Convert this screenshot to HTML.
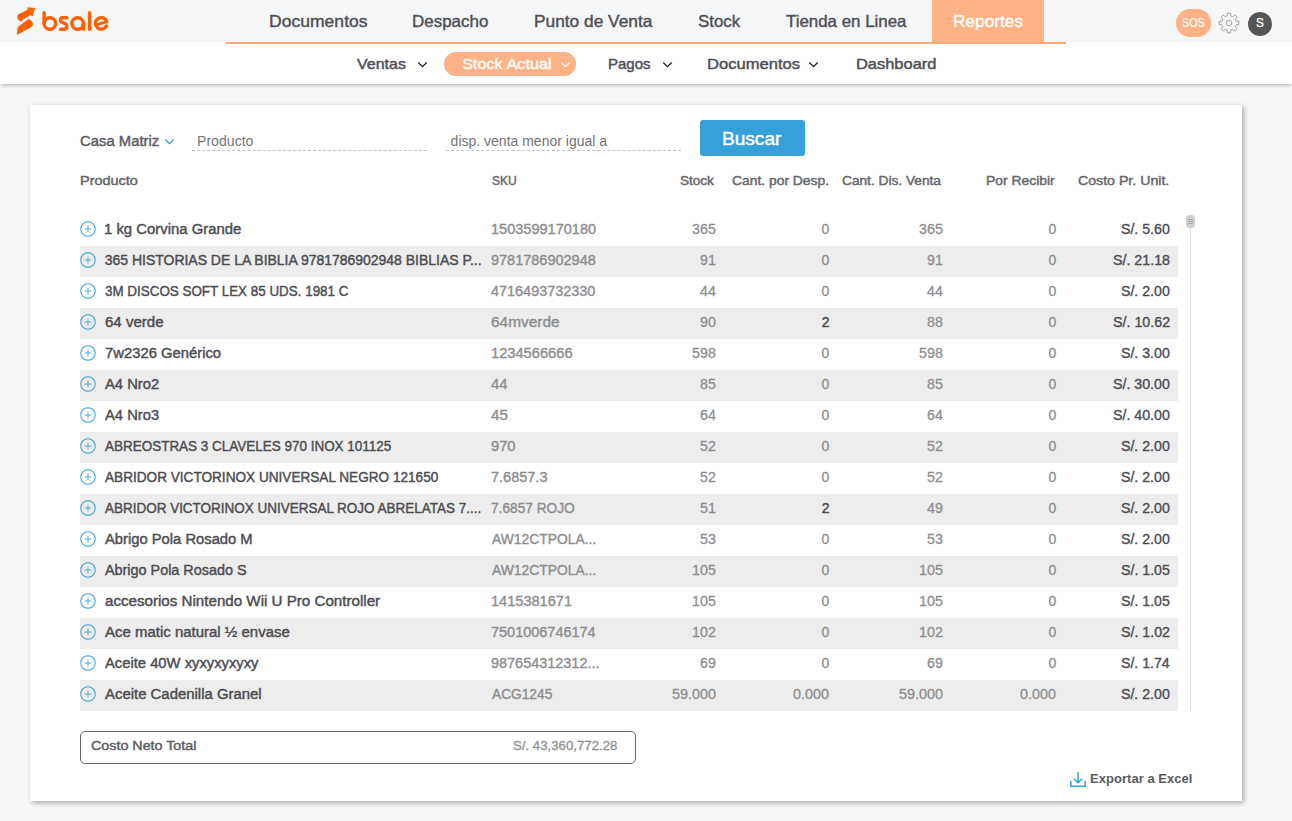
<!DOCTYPE html>
<html><head><meta charset="utf-8">
<style>
*{box-sizing:border-box;margin:0;padding:0}
html,body{width:1292px;height:821px;overflow:hidden;background:#f5f6f8;font-family:"Liberation Sans",sans-serif;color:#4d4d4d}
.abs{position:absolute;white-space:nowrap}
.t{position:absolute;white-space:nowrap}
#sub{position:absolute;left:0;top:42px;width:1292px;height:42px;background:#fff;box-shadow:0 3px 3px -1px rgba(0,0,0,0.2)}
#oline{position:absolute;left:226px;top:42px;width:840px;height:2px;background:#ffa97a}
#rep{position:absolute;left:932px;top:0;width:112px;height:42px;background:#ffb285}
#pill{position:absolute;left:444px;top:52px;width:132px;height:24px;border-radius:12px;background:#ffb285}
#card{position:absolute;left:30px;top:105px;width:1212px;height:696px;background:#fff;box-shadow:2px 2px 5px rgba(0,0,0,0.3)}
.dash{position:absolute;height:1px;border-top:1px dashed #c4c4c4}
#buscar{position:absolute;left:700px;top:120px;width:105px;height:36px;border-radius:3px;background:#34a1d8}
.row{position:absolute;left:80px;width:1098px;height:31px}
.row.s{background:#ededed}
.plus{position:absolute;left:0;top:6px;width:16px;height:16px}
.chev{position:absolute}
</style></head><body>
<div id="sub"></div>
<div id="rep"></div>
<div id="oline"></div>
<div id="pill"></div>
<svg class="abs" style="left:0;top:0" width="120" height="42" viewBox="0 0 120 42">
  <path d="M27.3,7.3 L35.1,8.1 L32.4,16.2 L30.6,15 L21.9,20.4 L21.5,21.9 Q17,19.5 17.1,16.8 Q17.2,15 18.5,14.2 L27.5,9.8 Z" fill="#ff6000"/>
  <path d="M28.5,18.9 Q33.3,21.3 32.9,24.3 Q32.6,26.4 31,27.2 L17.1,34.9 L17.2,29.2 Q17.6,26.6 19.6,25.4 Z" fill="#ff6000"/>
  <g fill="none" stroke="#ff6000" stroke-width="3.4" stroke-linecap="round">
    <path d="M44.1,12.7 V23.5"/>
    <circle cx="49.85" cy="23.5" r="5.75"/>
    <path d="M66.8,17.8 L62.7,17.8 Q60.5,17.8 60.5,20.1 Q60.5,21.9 62.6,22.6 L64.9,23.5 Q66.8,24.3 66.8,26.6 Q66.8,29.3 64,29.3 L60.6,29.3"/>
    <circle cx="77.6" cy="23.5" r="5.75"/>
    <path d="M83.4,23.5 V29.3"/>
    <path d="M89.5,12.7 V29.3"/>
    <path d="M106.7,21.6 A5.75,5.75 0 1 0 106.4,25.9"/><path d="M95.8,25.2 L106.7,21.6" stroke-width="2.8"/>
  </g>
</svg>
<div class="abs" style="left:1176px;top:9px;width:35px;height:28px;border-radius:14px;background:#ffb285"></div>
<svg class="abs" style="left:1218px;top:12px" width="22" height="22" viewBox="0 0 22 22"><path d="M9.18,3.93 L9.44,1.12 L12.56,1.12 L12.82,3.93 L14.72,4.72 L16.88,2.91 L19.09,5.12 L17.28,7.28 L18.07,9.18 L20.88,9.44 L20.88,12.56 L18.07,12.82 L17.28,14.72 L19.09,16.88 L16.88,19.09 L14.72,17.28 L12.82,18.07 L12.56,20.88 L9.44,20.88 L9.18,18.07 L7.28,17.28 L5.12,19.09 L2.91,16.88 L4.72,14.72 L3.93,12.82 L1.12,12.56 L1.12,9.44 L3.93,9.18 L4.72,7.28 L2.91,5.12 L5.12,2.91 L7.28,4.72Z" fill="none" stroke="#909090" stroke-width="0.8" stroke-linejoin="round"/><circle cx="11" cy="11" r="2.8" fill="none" stroke="#909090" stroke-width="0.8"/></svg>
<div class="abs" style="left:1248px;top:12px;width:24px;height:24px;border-radius:12px;background:#555"></div>


<div id="card"></div>
<svg class="chev" style="left:417px;top:61px" width="11" height="8" viewBox="0 0 11 8"><path d="M1.3,1.5 L5.5,5.6 L9.7,1.5" fill="none" stroke="#1a1a1a" stroke-width="1.25"/></svg>
<svg class="chev" style="left:560px;top:61px" width="11" height="8" viewBox="0 0 11 8"><path d="M1.3,1.5 L5.5,5.6 L9.7,1.5" fill="none" stroke="#ffffff" stroke-width="1.1"/></svg>
<svg class="chev" style="left:662px;top:61px" width="11" height="8" viewBox="0 0 11 8"><path d="M1.3,1.5 L5.5,5.6 L9.7,1.5" fill="none" stroke="#1a1a1a" stroke-width="1.25"/></svg>
<svg class="chev" style="left:808px;top:61px" width="11" height="8" viewBox="0 0 11 8"><path d="M1.3,1.5 L5.5,5.6 L9.7,1.5" fill="none" stroke="#1a1a1a" stroke-width="1.25"/></svg>
<svg class="chev" style="left:164px;top:138px" width="11" height="8" viewBox="0 0 11 8"><path d="M1.3,1.5 L5.5,5.6 L9.7,1.5" fill="none" stroke="#2a98d8" stroke-width="1.15"/></svg>

<div class="dash" style="left:192px;top:150px;width:235px"></div>
<div class="dash" style="left:446px;top:150px;width:235px"></div>
<div id="buscar"></div>

<div class="row" style="top:215px"><svg class="plus" viewBox="0 0 16 16"><circle cx="8" cy="8" r="7.25" fill="none" stroke="#3aa2d9" stroke-width="1.05"/><path d="M8 4.6V11.4M4.6 8H11.4" stroke="#4aaadc" stroke-width="0.95"/></svg></div>
<div class="row s" style="top:246px"><svg class="plus" viewBox="0 0 16 16"><circle cx="8" cy="8" r="7.25" fill="none" stroke="#3aa2d9" stroke-width="1.05"/><path d="M8 4.6V11.4M4.6 8H11.4" stroke="#4aaadc" stroke-width="0.95"/></svg></div>
<div class="row" style="top:277px"><svg class="plus" viewBox="0 0 16 16"><circle cx="8" cy="8" r="7.25" fill="none" stroke="#3aa2d9" stroke-width="1.05"/><path d="M8 4.6V11.4M4.6 8H11.4" stroke="#4aaadc" stroke-width="0.95"/></svg></div>
<div class="row s" style="top:308px"><svg class="plus" viewBox="0 0 16 16"><circle cx="8" cy="8" r="7.25" fill="none" stroke="#3aa2d9" stroke-width="1.05"/><path d="M8 4.6V11.4M4.6 8H11.4" stroke="#4aaadc" stroke-width="0.95"/></svg></div>
<div class="row" style="top:339px"><svg class="plus" viewBox="0 0 16 16"><circle cx="8" cy="8" r="7.25" fill="none" stroke="#3aa2d9" stroke-width="1.05"/><path d="M8 4.6V11.4M4.6 8H11.4" stroke="#4aaadc" stroke-width="0.95"/></svg></div>
<div class="row s" style="top:370px"><svg class="plus" viewBox="0 0 16 16"><circle cx="8" cy="8" r="7.25" fill="none" stroke="#3aa2d9" stroke-width="1.05"/><path d="M8 4.6V11.4M4.6 8H11.4" stroke="#4aaadc" stroke-width="0.95"/></svg></div>
<div class="row" style="top:401px"><svg class="plus" viewBox="0 0 16 16"><circle cx="8" cy="8" r="7.25" fill="none" stroke="#3aa2d9" stroke-width="1.05"/><path d="M8 4.6V11.4M4.6 8H11.4" stroke="#4aaadc" stroke-width="0.95"/></svg></div>
<div class="row s" style="top:432px"><svg class="plus" viewBox="0 0 16 16"><circle cx="8" cy="8" r="7.25" fill="none" stroke="#3aa2d9" stroke-width="1.05"/><path d="M8 4.6V11.4M4.6 8H11.4" stroke="#4aaadc" stroke-width="0.95"/></svg></div>
<div class="row" style="top:463px"><svg class="plus" viewBox="0 0 16 16"><circle cx="8" cy="8" r="7.25" fill="none" stroke="#3aa2d9" stroke-width="1.05"/><path d="M8 4.6V11.4M4.6 8H11.4" stroke="#4aaadc" stroke-width="0.95"/></svg></div>
<div class="row s" style="top:494px"><svg class="plus" viewBox="0 0 16 16"><circle cx="8" cy="8" r="7.25" fill="none" stroke="#3aa2d9" stroke-width="1.05"/><path d="M8 4.6V11.4M4.6 8H11.4" stroke="#4aaadc" stroke-width="0.95"/></svg></div>
<div class="row" style="top:525px"><svg class="plus" viewBox="0 0 16 16"><circle cx="8" cy="8" r="7.25" fill="none" stroke="#3aa2d9" stroke-width="1.05"/><path d="M8 4.6V11.4M4.6 8H11.4" stroke="#4aaadc" stroke-width="0.95"/></svg></div>
<div class="row s" style="top:556px"><svg class="plus" viewBox="0 0 16 16"><circle cx="8" cy="8" r="7.25" fill="none" stroke="#3aa2d9" stroke-width="1.05"/><path d="M8 4.6V11.4M4.6 8H11.4" stroke="#4aaadc" stroke-width="0.95"/></svg></div>
<div class="row" style="top:587px"><svg class="plus" viewBox="0 0 16 16"><circle cx="8" cy="8" r="7.25" fill="none" stroke="#3aa2d9" stroke-width="1.05"/><path d="M8 4.6V11.4M4.6 8H11.4" stroke="#4aaadc" stroke-width="0.95"/></svg></div>
<div class="row s" style="top:618px"><svg class="plus" viewBox="0 0 16 16"><circle cx="8" cy="8" r="7.25" fill="none" stroke="#3aa2d9" stroke-width="1.05"/><path d="M8 4.6V11.4M4.6 8H11.4" stroke="#4aaadc" stroke-width="0.95"/></svg></div>
<div class="row" style="top:649px"><svg class="plus" viewBox="0 0 16 16"><circle cx="8" cy="8" r="7.25" fill="none" stroke="#3aa2d9" stroke-width="1.05"/><path d="M8 4.6V11.4M4.6 8H11.4" stroke="#4aaadc" stroke-width="0.95"/></svg></div>
<div class="row s" style="top:680px"><svg class="plus" viewBox="0 0 16 16"><circle cx="8" cy="8" r="7.25" fill="none" stroke="#3aa2d9" stroke-width="1.05"/><path d="M8 4.6V11.4M4.6 8H11.4" stroke="#4aaadc" stroke-width="0.95"/></svg></div>

<div class="abs" style="left:1190px;top:226px;width:1px;height:485px;background:#dcdcdc"></div>
<div class="abs" style="left:1186px;top:215px;width:9px;height:13px;border-radius:4px;background:#d0d0d0"></div>
<div class="abs" style="left:1188px;top:219px;width:5px;height:1px;background:#a8a8a8"></div>
<div class="abs" style="left:1188px;top:221px;width:5px;height:1px;background:#a8a8a8"></div>
<div class="abs" style="left:1188px;top:223px;width:5px;height:1px;background:#a8a8a8"></div>

<div class="abs" style="left:80px;top:731px;width:556px;height:33px;border:1px solid #666;border-radius:5px"></div>
<svg class="abs" style="left:1069px;top:771px" width="18" height="17" viewBox="0 0 18 17"><g fill="none" stroke="#3aa0d8" stroke-width="1.5" stroke-linejoin="round" stroke-linecap="round"><path d="M9,1.7 V11.8 M5.4,8.3 L9,11.8 L12.6,8.3"/><path d="M1.8,10.5 V15.2 H16.2 V10.5"/></g></svg>

<div class="t" style="left:268.82px;top:13px;font-size:16.5px;line-height:16.5px;color:#4f4f57;transform:scaleX(1.0639);transform-origin:0 0;-webkit-text-stroke:0.4px #4f4f57;">Documentos</div>
<div class="t" style="left:412.46px;top:13px;font-size:16.5px;line-height:16.5px;color:#4f4f57;transform:scaleX(1.0277);transform-origin:0 0;-webkit-text-stroke:0.4px #4f4f57;">Despacho</div>
<div class="t" style="left:533.84px;top:13px;font-size:16.5px;line-height:16.5px;color:#4f4f57;transform:scaleX(1.0493);transform-origin:0 0;-webkit-text-stroke:0.4px #4f4f57;">Punto de Venta</div>
<div class="t" style="left:697.99px;top:13px;font-size:16.5px;line-height:16.5px;color:#4f4f57;transform:scaleX(1.0197);transform-origin:0 0;-webkit-text-stroke:0.4px #4f4f57;">Stock</div>
<div class="t" style="left:786.49px;top:13px;font-size:16.5px;line-height:16.5px;color:#4f4f57;transform:scaleX(1.0230);transform-origin:0 0;-webkit-text-stroke:0.4px #4f4f57;">Tienda en Linea</div>
<div class="t" style="left:952.64px;top:13px;font-size:16.5px;line-height:16.5px;color:#ffffff;transform:scaleX(1.0461);transform-origin:0 0;-webkit-text-stroke:0.4px #ffffff;">Reportes</div>
<div class="t" style="left:356.99px;top:57px;font-size:14.5px;line-height:14.5px;color:#4f4f57;transform:scaleX(1.1027);transform-origin:0 0;-webkit-text-stroke:0.45px #4f4f57;">Ventas</div>
<div class="t" style="left:607.76px;top:57px;font-size:14.5px;line-height:14.5px;color:#4f4f57;transform:scaleX(1.0354);transform-origin:0 0;-webkit-text-stroke:0.45px #4f4f57;">Pagos</div>
<div class="t" style="left:706.53px;top:57px;font-size:14.5px;line-height:14.5px;color:#4f4f57;transform:scaleX(1.1430);transform-origin:0 0;-webkit-text-stroke:0.45px #4f4f57;">Documentos</div>
<div class="t" style="left:855.54px;top:57px;font-size:14.5px;line-height:14.5px;color:#4f4f57;transform:scaleX(1.1335);transform-origin:0 0;-webkit-text-stroke:0.45px #4f4f57;">Dashboard</div>
<div class="t" style="left:462.01px;top:57px;font-size:14.5px;line-height:14.5px;color:#ffffff;transform:scaleX(1.1240);transform-origin:0 0;-webkit-text-stroke:0.4px #ffffff;">Stock Actual</div>
<div class="t" style="left:79.96px;top:134px;font-size:14px;line-height:14px;color:#5c5c62;transform:scaleX(1.0600);transform-origin:0 0;-webkit-text-stroke:0.42px #5c5c62;">Casa Matriz</div>
<div class="t" style="left:196.89px;top:134px;font-size:14px;line-height:14px;color:#757575;transform:scaleX(1.0074);transform-origin:0 0;">Producto</div>
<div class="t" style="left:450.60px;top:134px;font-size:14px;line-height:14px;color:#757575;letter-spacing:0.000px;">disp. venta menor igual a</div>
<div class="t" style="left:722.21px;top:130px;font-size:18px;line-height:18px;color:#ffffff;transform:scaleX(1.0590);transform-origin:0 0;-webkit-text-stroke:0.45px #ffffff;">Buscar</div>
<div class="t" style="left:79.59px;top:174px;font-size:13px;line-height:13px;color:#67676d;transform:scaleX(1.1129);transform-origin:0 0;-webkit-text-stroke:0.45px #67676d;">Producto</div>
<div class="t" style="left:492.05px;top:174px;font-size:13px;line-height:13px;color:#67676d;transform:scaleX(0.9203);transform-origin:0 0;-webkit-text-stroke:0.45px #67676d;">SKU</div>
<div class="t" style="left:680.28px;top:174px;font-size:13px;line-height:13px;color:#67676d;transform:scaleX(1.0408);transform-origin:0 0;-webkit-text-stroke:0.45px #67676d;">Stock</div>
<div class="t" style="left:731.76px;top:174px;font-size:13px;line-height:13px;color:#67676d;transform:scaleX(1.0661);transform-origin:0 0;-webkit-text-stroke:0.45px #67676d;">Cant. por Desp.</div>
<div class="t" style="left:842.37px;top:174px;font-size:13px;line-height:13px;color:#67676d;transform:scaleX(1.0535);transform-origin:0 0;-webkit-text-stroke:0.45px #67676d;">Cant. Dis. Venta</div>
<div class="t" style="left:986.03px;top:174px;font-size:13px;line-height:13px;color:#67676d;transform:scaleX(1.0681);transform-origin:0 0;-webkit-text-stroke:0.45px #67676d;">Por Recibir</div>
<div class="t" style="left:1077.95px;top:174px;font-size:13px;line-height:13px;color:#67676d;transform:scaleX(1.0889);transform-origin:0 0;-webkit-text-stroke:0.45px #67676d;">Costo Pr. Unit.</div>
<div class="t" style="left:104.24px;top:222px;font-size:14px;line-height:14px;color:#4d4d53;transform:scaleX(1.0627);transform-origin:0 0;-webkit-text-stroke:0.42px #4d4d53;">1 kg Corvina Grande</div>
<div class="t" style="left:490.76px;top:222px;font-size:14px;line-height:14px;color:#8e8e90;transform:scaleX(1.0381);transform-origin:0 0;-webkit-text-stroke:0.38px #8e8e90;">1503599170180</div>
<div class="t" style="left:691.75px;top:222px;font-size:14px;line-height:14px;color:#8e8e90;transform:scaleX(1.0197);transform-origin:0 0;-webkit-text-stroke:0.28px #8e8e90;">365</div>
<div class="t" style="left:821.50px;top:222px;font-size:14px;line-height:14px;color:#8e8e90;transform:scaleX(1.0000);transform-origin:0 0;-webkit-text-stroke:0.28px #8e8e90;">0</div>
<div class="t" style="left:918.85px;top:222px;font-size:14px;line-height:14px;color:#8e8e90;transform:scaleX(1.0197);transform-origin:0 0;-webkit-text-stroke:0.28px #8e8e90;">365</div>
<div class="t" style="left:1048.40px;top:222px;font-size:14px;line-height:14px;color:#8e8e90;transform:scaleX(1.0000);transform-origin:0 0;-webkit-text-stroke:0.28px #8e8e90;">0</div>
<div class="t" style="left:1121.09px;top:222px;font-size:14px;line-height:14px;color:#4d4d53;transform:scaleX(1.0106);transform-origin:0 0;-webkit-text-stroke:0.36px #4d4d53;">S/. 5.60</div>
<div class="t" style="left:104.80px;top:253px;font-size:14px;line-height:14px;color:#4d4d53;letter-spacing:-0.019px;-webkit-text-stroke:0.42px #4d4d53;">365 HISTORIAS DE LA BIBLIA 9781786902948 BIBLIAS P...</div>
<div class="t" style="left:491.18px;top:253px;font-size:14px;line-height:14px;color:#8e8e90;transform:scaleX(1.0350);transform-origin:0 0;-webkit-text-stroke:0.38px #8e8e90;">9781786902948</div>
<div class="t" style="left:699.87px;top:253px;font-size:14px;line-height:14px;color:#8e8e90;transform:scaleX(1.0154);transform-origin:0 0;-webkit-text-stroke:0.28px #8e8e90;">91</div>
<div class="t" style="left:821.50px;top:253px;font-size:14px;line-height:14px;color:#8e8e90;transform:scaleX(1.0000);transform-origin:0 0;-webkit-text-stroke:0.28px #8e8e90;">0</div>
<div class="t" style="left:926.97px;top:253px;font-size:14px;line-height:14px;color:#8e8e90;transform:scaleX(1.0154);transform-origin:0 0;-webkit-text-stroke:0.28px #8e8e90;">91</div>
<div class="t" style="left:1048.40px;top:253px;font-size:14px;line-height:14px;color:#8e8e90;transform:scaleX(1.0000);transform-origin:0 0;-webkit-text-stroke:0.28px #8e8e90;">0</div>
<div class="t" style="left:1112.99px;top:253px;font-size:14px;line-height:14px;color:#4d4d53;transform:scaleX(1.0164);transform-origin:0 0;-webkit-text-stroke:0.36px #4d4d53;">S/. 21.18</div>
<div class="t" style="left:104.82px;top:284px;font-size:14px;line-height:14px;color:#4d4d53;transform:scaleX(0.9577);transform-origin:0 0;-webkit-text-stroke:0.42px #4d4d53;">3M DISCOS SOFT LEX 85 UDS. 1981 C</div>
<div class="t" style="left:491.49px;top:284px;font-size:14px;line-height:14px;color:#8e8e90;transform:scaleX(1.0309);transform-origin:0 0;-webkit-text-stroke:0.38px #8e8e90;">4716493732330</div>
<div class="t" style="left:699.58px;top:284px;font-size:14px;line-height:14px;color:#8e8e90;transform:scaleX(1.0148);transform-origin:0 0;-webkit-text-stroke:0.28px #8e8e90;">44</div>
<div class="t" style="left:821.50px;top:284px;font-size:14px;line-height:14px;color:#8e8e90;transform:scaleX(1.0000);transform-origin:0 0;-webkit-text-stroke:0.28px #8e8e90;">0</div>
<div class="t" style="left:926.68px;top:284px;font-size:14px;line-height:14px;color:#8e8e90;transform:scaleX(1.0148);transform-origin:0 0;-webkit-text-stroke:0.28px #8e8e90;">44</div>
<div class="t" style="left:1048.40px;top:284px;font-size:14px;line-height:14px;color:#8e8e90;transform:scaleX(1.0000);transform-origin:0 0;-webkit-text-stroke:0.28px #8e8e90;">0</div>
<div class="t" style="left:1121.09px;top:284px;font-size:14px;line-height:14px;color:#4d4d53;transform:scaleX(1.0106);transform-origin:0 0;-webkit-text-stroke:0.36px #4d4d53;">S/. 2.00</div>
<div class="t" style="left:104.55px;top:315px;font-size:14px;line-height:14px;color:#4d4d53;transform:scaleX(1.0752);transform-origin:0 0;-webkit-text-stroke:0.42px #4d4d53;">64 verde</div>
<div class="t" style="left:491.03px;top:315px;font-size:14px;line-height:14px;color:#8e8e90;transform:scaleX(1.1016);transform-origin:0 0;-webkit-text-stroke:0.38px #8e8e90;">64mverde</div>
<div class="t" style="left:699.67px;top:315px;font-size:14px;line-height:14px;color:#8e8e90;transform:scaleX(1.0152);transform-origin:0 0;-webkit-text-stroke:0.28px #8e8e90;">90</div>
<div class="t" style="left:821.70px;top:315px;font-size:14px;line-height:14px;color:#4d4d53;transform:scaleX(1.0000);transform-origin:0 0;-webkit-text-stroke:0.45px #4d4d53;">2</div>
<div class="t" style="left:926.87px;top:315px;font-size:14px;line-height:14px;color:#8e8e90;transform:scaleX(1.0153);transform-origin:0 0;-webkit-text-stroke:0.28px #8e8e90;">88</div>
<div class="t" style="left:1048.40px;top:315px;font-size:14px;line-height:14px;color:#8e8e90;transform:scaleX(1.0000);transform-origin:0 0;-webkit-text-stroke:0.28px #8e8e90;">0</div>
<div class="t" style="left:1112.99px;top:315px;font-size:14px;line-height:14px;color:#4d4d53;transform:scaleX(1.0182);transform-origin:0 0;-webkit-text-stroke:0.36px #4d4d53;">S/. 10.62</div>
<div class="t" style="left:104.56px;top:346px;font-size:14px;line-height:14px;color:#4d4d53;transform:scaleX(1.0581);transform-origin:0 0;-webkit-text-stroke:0.42px #4d4d53;">7w2326 Genérico</div>
<div class="t" style="left:490.75px;top:346px;font-size:14px;line-height:14px;color:#8e8e90;transform:scaleX(1.0472);transform-origin:0 0;-webkit-text-stroke:0.38px #8e8e90;">1234566666</div>
<div class="t" style="left:691.75px;top:346px;font-size:14px;line-height:14px;color:#8e8e90;transform:scaleX(1.0197);transform-origin:0 0;-webkit-text-stroke:0.28px #8e8e90;">598</div>
<div class="t" style="left:821.50px;top:346px;font-size:14px;line-height:14px;color:#8e8e90;transform:scaleX(1.0000);transform-origin:0 0;-webkit-text-stroke:0.28px #8e8e90;">0</div>
<div class="t" style="left:918.85px;top:346px;font-size:14px;line-height:14px;color:#8e8e90;transform:scaleX(1.0197);transform-origin:0 0;-webkit-text-stroke:0.28px #8e8e90;">598</div>
<div class="t" style="left:1048.40px;top:346px;font-size:14px;line-height:14px;color:#8e8e90;transform:scaleX(1.0000);transform-origin:0 0;-webkit-text-stroke:0.28px #8e8e90;">0</div>
<div class="t" style="left:1121.09px;top:346px;font-size:14px;line-height:14px;color:#4d4d53;transform:scaleX(1.0106);transform-origin:0 0;-webkit-text-stroke:0.36px #4d4d53;">S/. 3.00</div>
<div class="t" style="left:105.30px;top:377px;font-size:14px;line-height:14px;color:#4d4d53;transform:scaleX(1.0552);transform-origin:0 0;-webkit-text-stroke:0.42px #4d4d53;">A4 Nro2</div>
<div class="t" style="left:491.48px;top:377px;font-size:14px;line-height:14px;color:#8e8e90;transform:scaleX(1.0671);transform-origin:0 0;-webkit-text-stroke:0.38px #8e8e90;">44</div>
<div class="t" style="left:699.77px;top:377px;font-size:14px;line-height:14px;color:#8e8e90;transform:scaleX(1.0153);transform-origin:0 0;-webkit-text-stroke:0.28px #8e8e90;">85</div>
<div class="t" style="left:821.50px;top:377px;font-size:14px;line-height:14px;color:#8e8e90;transform:scaleX(1.0000);transform-origin:0 0;-webkit-text-stroke:0.28px #8e8e90;">0</div>
<div class="t" style="left:926.87px;top:377px;font-size:14px;line-height:14px;color:#8e8e90;transform:scaleX(1.0153);transform-origin:0 0;-webkit-text-stroke:0.28px #8e8e90;">85</div>
<div class="t" style="left:1048.40px;top:377px;font-size:14px;line-height:14px;color:#8e8e90;transform:scaleX(1.0000);transform-origin:0 0;-webkit-text-stroke:0.28px #8e8e90;">0</div>
<div class="t" style="left:1112.99px;top:377px;font-size:14px;line-height:14px;color:#4d4d53;transform:scaleX(1.0145);transform-origin:0 0;-webkit-text-stroke:0.36px #4d4d53;">S/. 30.00</div>
<div class="t" style="left:105.30px;top:408px;font-size:14px;line-height:14px;color:#4d4d53;transform:scaleX(1.0531);transform-origin:0 0;-webkit-text-stroke:0.42px #4d4d53;">A4 Nro3</div>
<div class="t" style="left:491.48px;top:408px;font-size:14px;line-height:14px;color:#8e8e90;transform:scaleX(1.0816);transform-origin:0 0;-webkit-text-stroke:0.38px #8e8e90;">45</div>
<div class="t" style="left:699.57px;top:408px;font-size:14px;line-height:14px;color:#8e8e90;transform:scaleX(1.0152);transform-origin:0 0;-webkit-text-stroke:0.28px #8e8e90;">64</div>
<div class="t" style="left:821.50px;top:408px;font-size:14px;line-height:14px;color:#8e8e90;transform:scaleX(1.0000);transform-origin:0 0;-webkit-text-stroke:0.28px #8e8e90;">0</div>
<div class="t" style="left:926.67px;top:408px;font-size:14px;line-height:14px;color:#8e8e90;transform:scaleX(1.0152);transform-origin:0 0;-webkit-text-stroke:0.28px #8e8e90;">64</div>
<div class="t" style="left:1048.40px;top:408px;font-size:14px;line-height:14px;color:#8e8e90;transform:scaleX(1.0000);transform-origin:0 0;-webkit-text-stroke:0.28px #8e8e90;">0</div>
<div class="t" style="left:1112.99px;top:408px;font-size:14px;line-height:14px;color:#4d4d53;transform:scaleX(1.0145);transform-origin:0 0;-webkit-text-stroke:0.36px #4d4d53;">S/. 40.00</div>
<div class="t" style="left:105.30px;top:439px;font-size:14px;line-height:14px;color:#4d4d53;transform:scaleX(0.9623);transform-origin:0 0;-webkit-text-stroke:0.42px #4d4d53;">ABREOSTRAS 3 CLAVELES 970 INOX 101125</div>
<div class="t" style="left:491.17px;top:439px;font-size:14px;line-height:14px;color:#8e8e90;transform:scaleX(1.0493);transform-origin:0 0;-webkit-text-stroke:0.38px #8e8e90;">970</div>
<div class="t" style="left:699.87px;top:439px;font-size:14px;line-height:14px;color:#8e8e90;transform:scaleX(1.0153);transform-origin:0 0;-webkit-text-stroke:0.28px #8e8e90;">52</div>
<div class="t" style="left:821.50px;top:439px;font-size:14px;line-height:14px;color:#8e8e90;transform:scaleX(1.0000);transform-origin:0 0;-webkit-text-stroke:0.28px #8e8e90;">0</div>
<div class="t" style="left:926.97px;top:439px;font-size:14px;line-height:14px;color:#8e8e90;transform:scaleX(1.0153);transform-origin:0 0;-webkit-text-stroke:0.28px #8e8e90;">52</div>
<div class="t" style="left:1048.40px;top:439px;font-size:14px;line-height:14px;color:#8e8e90;transform:scaleX(1.0000);transform-origin:0 0;-webkit-text-stroke:0.28px #8e8e90;">0</div>
<div class="t" style="left:1121.09px;top:439px;font-size:14px;line-height:14px;color:#4d4d53;transform:scaleX(1.0106);transform-origin:0 0;-webkit-text-stroke:0.36px #4d4d53;">S/. 2.00</div>
<div class="t" style="left:105.30px;top:470px;font-size:14px;line-height:14px;color:#4d4d53;transform:scaleX(0.9714);transform-origin:0 0;-webkit-text-stroke:0.42px #4d4d53;">ABRIDOR VICTORINOX UNIVERSAL NEGRO 121650</div>
<div class="t" style="left:491.07px;top:470px;font-size:14px;line-height:14px;color:#8e8e90;transform:scaleX(1.0357);transform-origin:0 0;-webkit-text-stroke:0.38px #8e8e90;">7.6857.3</div>
<div class="t" style="left:699.87px;top:470px;font-size:14px;line-height:14px;color:#8e8e90;transform:scaleX(1.0153);transform-origin:0 0;-webkit-text-stroke:0.28px #8e8e90;">52</div>
<div class="t" style="left:821.50px;top:470px;font-size:14px;line-height:14px;color:#8e8e90;transform:scaleX(1.0000);transform-origin:0 0;-webkit-text-stroke:0.28px #8e8e90;">0</div>
<div class="t" style="left:926.97px;top:470px;font-size:14px;line-height:14px;color:#8e8e90;transform:scaleX(1.0153);transform-origin:0 0;-webkit-text-stroke:0.28px #8e8e90;">52</div>
<div class="t" style="left:1048.40px;top:470px;font-size:14px;line-height:14px;color:#8e8e90;transform:scaleX(1.0000);transform-origin:0 0;-webkit-text-stroke:0.28px #8e8e90;">0</div>
<div class="t" style="left:1121.09px;top:470px;font-size:14px;line-height:14px;color:#4d4d53;transform:scaleX(1.0106);transform-origin:0 0;-webkit-text-stroke:0.36px #4d4d53;">S/. 2.00</div>
<div class="t" style="left:105.30px;top:501px;font-size:14px;line-height:14px;color:#4d4d53;transform:scaleX(0.9625);transform-origin:0 0;-webkit-text-stroke:0.42px #4d4d53;">ABRIDOR VICTORINOX UNIVERSAL ROJO ABRELATAS 7....</div>
<div class="t" style="left:491.12px;top:501px;font-size:14px;line-height:14px;color:#8e8e90;transform:scaleX(0.9774);transform-origin:0 0;-webkit-text-stroke:0.38px #8e8e90;">7.6857 ROJO</div>
<div class="t" style="left:699.87px;top:501px;font-size:14px;line-height:14px;color:#8e8e90;transform:scaleX(1.0153);transform-origin:0 0;-webkit-text-stroke:0.28px #8e8e90;">51</div>
<div class="t" style="left:821.70px;top:501px;font-size:14px;line-height:14px;color:#4d4d53;transform:scaleX(1.0000);transform-origin:0 0;-webkit-text-stroke:0.45px #4d4d53;">2</div>
<div class="t" style="left:926.98px;top:501px;font-size:14px;line-height:14px;color:#8e8e90;transform:scaleX(1.0151);transform-origin:0 0;-webkit-text-stroke:0.28px #8e8e90;">49</div>
<div class="t" style="left:1048.40px;top:501px;font-size:14px;line-height:14px;color:#8e8e90;transform:scaleX(1.0000);transform-origin:0 0;-webkit-text-stroke:0.28px #8e8e90;">0</div>
<div class="t" style="left:1121.09px;top:501px;font-size:14px;line-height:14px;color:#4d4d53;transform:scaleX(1.0106);transform-origin:0 0;-webkit-text-stroke:0.36px #4d4d53;">S/. 2.00</div>
<div class="t" style="left:105.30px;top:532px;font-size:14px;line-height:14px;color:#4d4d53;transform:scaleX(1.0540);transform-origin:0 0;-webkit-text-stroke:0.42px #4d4d53;">Abrigo Pola Rosado M</div>
<div class="t" style="left:491.80px;top:532px;font-size:14px;line-height:14px;color:#8e8e90;transform:scaleX(0.9894);transform-origin:0 0;-webkit-text-stroke:0.38px #8e8e90;">AW12CTPOLA...</div>
<div class="t" style="left:699.77px;top:532px;font-size:14px;line-height:14px;color:#8e8e90;transform:scaleX(1.0152);transform-origin:0 0;-webkit-text-stroke:0.28px #8e8e90;">53</div>
<div class="t" style="left:821.50px;top:532px;font-size:14px;line-height:14px;color:#8e8e90;transform:scaleX(1.0000);transform-origin:0 0;-webkit-text-stroke:0.28px #8e8e90;">0</div>
<div class="t" style="left:926.87px;top:532px;font-size:14px;line-height:14px;color:#8e8e90;transform:scaleX(1.0152);transform-origin:0 0;-webkit-text-stroke:0.28px #8e8e90;">53</div>
<div class="t" style="left:1048.40px;top:532px;font-size:14px;line-height:14px;color:#8e8e90;transform:scaleX(1.0000);transform-origin:0 0;-webkit-text-stroke:0.28px #8e8e90;">0</div>
<div class="t" style="left:1121.09px;top:532px;font-size:14px;line-height:14px;color:#4d4d53;transform:scaleX(1.0106);transform-origin:0 0;-webkit-text-stroke:0.36px #4d4d53;">S/. 2.00</div>
<div class="t" style="left:105.30px;top:563px;font-size:14px;line-height:14px;color:#4d4d53;transform:scaleX(1.0270);transform-origin:0 0;-webkit-text-stroke:0.42px #4d4d53;">Abrigo Pola Rosado S</div>
<div class="t" style="left:491.80px;top:563px;font-size:14px;line-height:14px;color:#8e8e90;transform:scaleX(0.9894);transform-origin:0 0;-webkit-text-stroke:0.38px #8e8e90;">AW12CTPOLA...</div>
<div class="t" style="left:691.74px;top:563px;font-size:14px;line-height:14px;color:#8e8e90;transform:scaleX(1.0202);transform-origin:0 0;-webkit-text-stroke:0.28px #8e8e90;">105</div>
<div class="t" style="left:821.50px;top:563px;font-size:14px;line-height:14px;color:#8e8e90;transform:scaleX(1.0000);transform-origin:0 0;-webkit-text-stroke:0.28px #8e8e90;">0</div>
<div class="t" style="left:918.84px;top:563px;font-size:14px;line-height:14px;color:#8e8e90;transform:scaleX(1.0202);transform-origin:0 0;-webkit-text-stroke:0.28px #8e8e90;">105</div>
<div class="t" style="left:1048.40px;top:563px;font-size:14px;line-height:14px;color:#8e8e90;transform:scaleX(1.0000);transform-origin:0 0;-webkit-text-stroke:0.28px #8e8e90;">0</div>
<div class="t" style="left:1121.09px;top:563px;font-size:14px;line-height:14px;color:#4d4d53;transform:scaleX(1.0127);transform-origin:0 0;-webkit-text-stroke:0.36px #4d4d53;">S/. 1.05</div>
<div class="t" style="left:104.65px;top:594px;font-size:14px;line-height:14px;color:#4d4d53;transform:scaleX(1.0812);transform-origin:0 0;-webkit-text-stroke:0.42px #4d4d53;">accesorios Nintendo Wii U Pro Controller</div>
<div class="t" style="left:490.76px;top:594px;font-size:14px;line-height:14px;color:#8e8e90;transform:scaleX(1.0407);transform-origin:0 0;-webkit-text-stroke:0.38px #8e8e90;">1415381671</div>
<div class="t" style="left:691.74px;top:594px;font-size:14px;line-height:14px;color:#8e8e90;transform:scaleX(1.0202);transform-origin:0 0;-webkit-text-stroke:0.28px #8e8e90;">105</div>
<div class="t" style="left:821.50px;top:594px;font-size:14px;line-height:14px;color:#8e8e90;transform:scaleX(1.0000);transform-origin:0 0;-webkit-text-stroke:0.28px #8e8e90;">0</div>
<div class="t" style="left:918.84px;top:594px;font-size:14px;line-height:14px;color:#8e8e90;transform:scaleX(1.0202);transform-origin:0 0;-webkit-text-stroke:0.28px #8e8e90;">105</div>
<div class="t" style="left:1048.40px;top:594px;font-size:14px;line-height:14px;color:#8e8e90;transform:scaleX(1.0000);transform-origin:0 0;-webkit-text-stroke:0.28px #8e8e90;">0</div>
<div class="t" style="left:1121.09px;top:594px;font-size:14px;line-height:14px;color:#4d4d53;transform:scaleX(1.0127);transform-origin:0 0;-webkit-text-stroke:0.36px #4d4d53;">S/. 1.05</div>
<div class="t" style="left:105.30px;top:625px;font-size:14px;line-height:14px;color:#4d4d53;transform:scaleX(1.0697);transform-origin:0 0;-webkit-text-stroke:0.42px #4d4d53;">Ace matic natural ½ envase</div>
<div class="t" style="left:491.08px;top:625px;font-size:14px;line-height:14px;color:#8e8e90;transform:scaleX(1.0340);transform-origin:0 0;-webkit-text-stroke:0.38px #8e8e90;">7501006746174</div>
<div class="t" style="left:691.84px;top:625px;font-size:14px;line-height:14px;color:#8e8e90;transform:scaleX(1.0203);transform-origin:0 0;-webkit-text-stroke:0.28px #8e8e90;">102</div>
<div class="t" style="left:821.50px;top:625px;font-size:14px;line-height:14px;color:#8e8e90;transform:scaleX(1.0000);transform-origin:0 0;-webkit-text-stroke:0.28px #8e8e90;">0</div>
<div class="t" style="left:918.94px;top:625px;font-size:14px;line-height:14px;color:#8e8e90;transform:scaleX(1.0203);transform-origin:0 0;-webkit-text-stroke:0.28px #8e8e90;">102</div>
<div class="t" style="left:1048.40px;top:625px;font-size:14px;line-height:14px;color:#8e8e90;transform:scaleX(1.0000);transform-origin:0 0;-webkit-text-stroke:0.28px #8e8e90;">0</div>
<div class="t" style="left:1121.09px;top:625px;font-size:14px;line-height:14px;color:#4d4d53;transform:scaleX(1.0149);transform-origin:0 0;-webkit-text-stroke:0.36px #4d4d53;">S/. 1.02</div>
<div class="t" style="left:105.30px;top:656px;font-size:14px;line-height:14px;color:#4d4d53;transform:scaleX(1.0550);transform-origin:0 0;-webkit-text-stroke:0.42px #4d4d53;">Aceite 40W xyxyxyxyxy</div>
<div class="t" style="left:491.18px;top:656px;font-size:14px;line-height:14px;color:#8e8e90;transform:scaleX(1.0320);transform-origin:0 0;-webkit-text-stroke:0.38px #8e8e90;">987654312312...</div>
<div class="t" style="left:699.87px;top:656px;font-size:14px;line-height:14px;color:#8e8e90;transform:scaleX(1.0155);transform-origin:0 0;-webkit-text-stroke:0.28px #8e8e90;">69</div>
<div class="t" style="left:821.50px;top:656px;font-size:14px;line-height:14px;color:#8e8e90;transform:scaleX(1.0000);transform-origin:0 0;-webkit-text-stroke:0.28px #8e8e90;">0</div>
<div class="t" style="left:926.97px;top:656px;font-size:14px;line-height:14px;color:#8e8e90;transform:scaleX(1.0155);transform-origin:0 0;-webkit-text-stroke:0.28px #8e8e90;">69</div>
<div class="t" style="left:1048.40px;top:656px;font-size:14px;line-height:14px;color:#8e8e90;transform:scaleX(1.0000);transform-origin:0 0;-webkit-text-stroke:0.28px #8e8e90;">0</div>
<div class="t" style="left:1121.09px;top:656px;font-size:14px;line-height:14px;color:#4d4d53;transform:scaleX(1.0085);transform-origin:0 0;-webkit-text-stroke:0.36px #4d4d53;">S/. 1.74</div>
<div class="t" style="left:105.30px;top:687px;font-size:14px;line-height:14px;color:#4d4d53;transform:scaleX(1.0650);transform-origin:0 0;-webkit-text-stroke:0.42px #4d4d53;">Aceite Cadenilla Granel</div>
<div class="t" style="left:491.80px;top:687px;font-size:14px;line-height:14px;color:#8e8e90;transform:scaleX(0.9803);transform-origin:0 0;-webkit-text-stroke:0.38px #8e8e90;">ACG1245</div>
<div class="t" style="left:671.59px;top:687px;font-size:14px;line-height:14px;color:#8e8e90;transform:scaleX(1.0263);transform-origin:0 0;-webkit-text-stroke:0.28px #8e8e90;">59.000</div>
<div class="t" style="left:793.41px;top:687px;font-size:14px;line-height:14px;color:#8e8e90;transform:scaleX(1.0259);transform-origin:0 0;-webkit-text-stroke:0.28px #8e8e90;">0.000</div>
<div class="t" style="left:898.69px;top:687px;font-size:14px;line-height:14px;color:#8e8e90;transform:scaleX(1.0263);transform-origin:0 0;-webkit-text-stroke:0.28px #8e8e90;">59.000</div>
<div class="t" style="left:1020.31px;top:687px;font-size:14px;line-height:14px;color:#8e8e90;transform:scaleX(1.0259);transform-origin:0 0;-webkit-text-stroke:0.28px #8e8e90;">0.000</div>
<div class="t" style="left:1121.09px;top:687px;font-size:14px;line-height:14px;color:#4d4d53;transform:scaleX(1.0106);transform-origin:0 0;-webkit-text-stroke:0.36px #4d4d53;">S/. 2.00</div>
<div class="t" style="left:1181.79px;top:17px;font-size:12.5px;line-height:12.5px;color:#ffffff;transform:scaleX(0.8577);transform-origin:0 0;-webkit-text-stroke:0.15px #ffffff;">SOS</div>
<div class="t" style="left:1255.96px;top:16px;font-size:13px;line-height:13px;color:#ffffff;transform:scaleX(0.9067);transform-origin:0 0;-webkit-text-stroke:0.3px #ffffff;">S</div>
<div class="t" style="left:90.84px;top:739px;font-size:13px;line-height:13px;color:#5c5c62;transform:scaleX(1.0996);transform-origin:0 0;-webkit-text-stroke:0.42px #5c5c62;">Costo Neto Total</div>
<div class="t" style="left:513.19px;top:739px;font-size:13px;line-height:13px;color:#8e8e90;transform:scaleX(1.0167);transform-origin:0 0;-webkit-text-stroke:0.28px #8e8e90;">S/. 43,360,772.28</div>
<div class="t" style="left:1090.10px;top:772px;font-size:13px;line-height:13px;color:#5c5c60;letter-spacing:0.033px;font-weight:bold;">Exportar a Excel</div>
</body></html>
